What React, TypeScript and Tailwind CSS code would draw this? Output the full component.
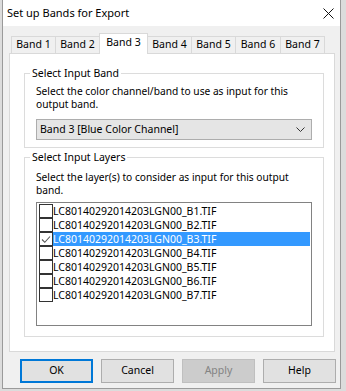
const tabs = ["Band 1", "Band 2", "Band 3", "Band 4", "Band 5", "Band 6", "Band 7"];
const tabWidths = ["w-[45px]", "w-[45px]", "w-[49px]", "w-[45px]", "w-[45px]", "w-[46px]", "w-[45px]"];
const layers = ["B1", "B2", "B3", "B4", "B5", "B6", "B7"].map(
  (b) => `LC80140292014203LGN00_${b}.TIF`,
);

const buttonClass =
  "flex h-[24px] w-[73px] items-center justify-center border text-[10.5px]";

function Tab({ label, active, index }: { label: string; active: boolean; index: number }) {
  const base = `${tabWidths[index]} flex items-center justify-center border border-b-0 border-[#d9d9d9] ${index > 0 ? "-ml-px" : ""}`;
  if (active) {
    return (
      <div className={`${base} relative z-10 -mb-px h-[21px] bg-white pb-[2px]`}>{label}</div>
    );
  }
  return <div className={`${base} h-[17px] bg-[#f0f0f0]`}>{label}</div>;
}

function Checkbox({ checked }: { checked: boolean }) {
  return (
    <span className="ml-[2px] flex h-[14px] w-[14px] shrink-0 items-center justify-center border border-[#333] bg-white">
      {checked && (
        <svg width="10" height="9" viewBox="0 0 10 9" fill="none">
          <path d="M1 4.5L3.8 7.3L9 1.5" stroke="#555" strokeWidth="1.1" />
        </svg>
      )}
    </span>
  );
}

export default function App() {
  return (
    <div className="h-[391px] w-[346px] overflow-hidden bg-[#dcdcdc] font-['Noto_Sans',sans-serif] text-[10.5px] text-black">
      <div className="ml-[2px] flex h-[389px] w-[339px] flex-col border border-t-0 border-[#9a9a9a] bg-[#f0f0f0]">
        {/* title bar */}
        <div className="flex h-[26px] items-center justify-between bg-white pl-[4px] pr-[6px]">
          <span className="text-[11px]">Set up Bands for Export</span>
          <svg width="11" height="11" viewBox="0 0 11 11" stroke="#111" strokeWidth="1">
            <path d="M0.5 0.5L10.5 10.5M10.5 0.5L0.5 10.5" />
          </svg>
        </div>

        {/* tabs */}
        <div className="ml-[8px] mt-[7px] flex h-[20px] items-end">
          {tabs.map((t, i) => (
            <Tab key={t} label={t} active={i === 2} index={i} />
          ))}
        </div>

        {/* panel */}
        <div className="ml-[6px] flex h-[299px] w-[326px] flex-col border border-[#d9d9d9] bg-white pl-[14px] pr-[10px] pt-[11px]">
          <fieldset className="border border-[#dcdcdc] px-[11px] pb-[7px]">
            <legend className="-ml-[6px] px-[2px] leading-[16px]">Select Input Band</legend>
            <p className="mt-[4px] text-[10.2px] leading-[13px]">
              Select the color channel/band to use as input for this output band.
            </p>
            <div className="mt-[8px] flex h-[21px] items-center justify-between border border-[#adadad] bg-[#e5e5e5] pl-[3px] pr-[6px]">
              <span>Band 3 [Blue Color Channel]</span>
              <svg width="9" height="5" viewBox="0 0 9 5" fill="none" stroke="#333" strokeWidth="1">
                <path d="M0.5 0.5L4.5 4.5L8.5 0.5" />
              </svg>
            </div>
          </fieldset>

          <fieldset className="mt-[1px] border border-[#dcdcdc] px-[11px] pb-[10px]">
            <legend className="-ml-[6px] px-[2px] leading-[16px]">Select Input Layers</legend>
            <p className="mt-[6px] text-[10.2px] leading-[13px]">
              Select the layer(s) to consider as input for this output band.
            </p>
            <div className="mt-[5px] h-[124px] border border-[#828282] bg-white pt-[1px]">
              {layers.map((name, i) => (
                <div key={name} className="flex h-[14px] items-stretch">
                  <Checkbox checked={i === 2} />
                  <span
                    className={`mr-[1px] flex flex-1 items-center leading-[14px] ${
                      i === 2 ? "bg-[#3399ff] text-white" : ""
                    }`}
                  >
                    {name}
                  </span>
                </div>
              ))}
            </div>
          </fieldset>
        </div>

        {/* buttons */}
        <div className="ml-[17px] mt-[7px] flex gap-[8px]">
          <button type="button" className={`${buttonClass} border-2 border-[#0078d7] bg-[#e1e1e1]`}>
            OK
          </button>
          <button type="button" className={`${buttonClass} border-[#adadad] bg-[#e1e1e1]`}>
            Cancel
          </button>
          <button type="button" className={`${buttonClass} border-[#bfbfbf] bg-[#cccccc] text-[#838383]`}>
            Apply
          </button>
          <button type="button" className={`${buttonClass} border-[#adadad] bg-[#e1e1e1]`}>
            Help
          </button>
        </div>
      </div>
    </div>
  );
}
